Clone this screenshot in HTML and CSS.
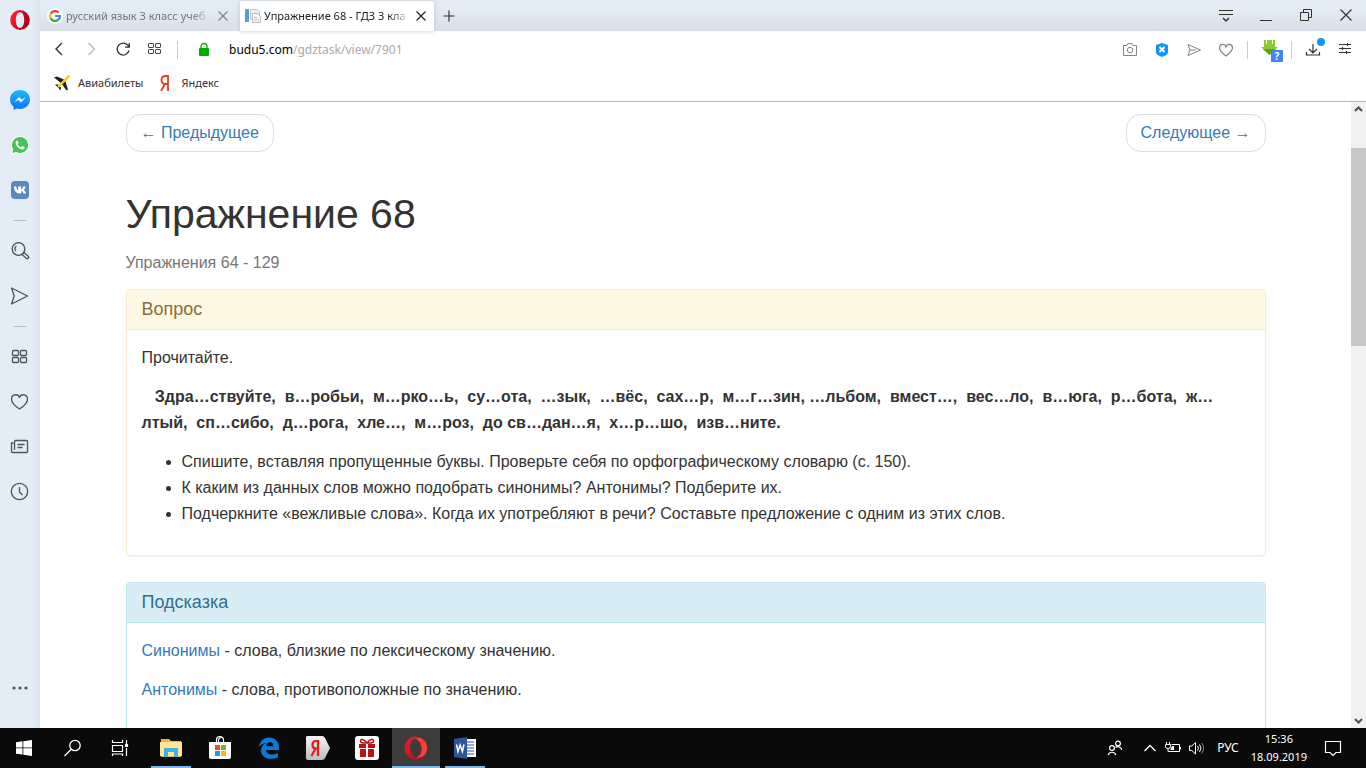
FILE: index.html
```html
<!DOCTYPE html>
<html lang="ru">
<head>
<meta charset="utf-8">
<title>Упражнение 68 - ГДЗ 3 класс</title>
<link rel="stylesheet" href="styles.css">
</head>
<body>
<div class="window">
  <nav class="sidebar" aria-label="Боковая панель">
    <button class="side-btn side-logo" aria-label="Opera"><svg width="20" height="20" viewBox="0 0 20 20"><defs><linearGradient id="op" x1="0" y1="0" x2="1" y2=".4"><stop offset=".2" stop-color="#ff1b2d"/><stop offset="1" stop-color="#a70014"/></linearGradient></defs><path fill="url(#op)" fill-rule="evenodd" d="M10 0a9.800 10 0 1 0 0 20a9.800 10 0 1 0 0-20zM10 2.200c2.700 0 4.200 3.500 4.200 7.800s-1.500 7.800-4.200 7.800s-4.200-3.500-4.200-7.800s1.500-7.800 4.200-7.800z"/></svg></button>
    <button class="side-btn" aria-label="Messenger"><svg width="20" height="20" viewBox="0 0 20 20"><defs><linearGradient id="ms" x1="0" y1="0" x2="0" y2="1"><stop offset="0" stop-color="#19b9ff"/><stop offset="1" stop-color="#0a72ff"/></linearGradient></defs><path fill="url(#ms)" d="M10 0C4.400 0 0 4.100 0 9.500c0 3 1.400 5.600 3.600 7.300V20l3.300-1.500c1 .3 2 .4 3.100.4 5.600 0 10-4.100 10-9.400S15.600 0 10 0z"/><path fill="#fff" d="M4 12.300l5-5.400 2.600 2.600L16 7l-5 5.500-2.700-2.600z"/></svg></button>
    <button class="side-btn" aria-label="WhatsApp"><svg width="20" height="20" viewBox="0 0 20 20"><path fill="#fff" d="M10 1a9 9 0 0 0-7.800 13.500L1 19.500l5-1.400A9 9 0 1 0 10 1z"/><path fill="#42c456" d="M10 2a8 8 0 0 0-6.800 12.200l-.9 3.800 3.900-1A8 8 0 1 0 10 2z"/><path fill="#fff" d="M7.300 5.400c-.9 0-1.700.9-1.700 2.100 0 3.200 3.900 7 6.900 7 1.300 0 2.200-.9 2.200-2 0-.4-2.200-1.500-2.500-1.400-.4.100-.9 1.200-1.300 1.200-.8 0-3.300-2.200-3.300-3 0-.4.900-.8.900-1.200 0-.4-.7-2.600-1.200-2.700z"/></svg></button>
    <button class="side-btn" aria-label="ВКонтакте"><svg width="20" height="20" viewBox="0 0 20 20"><rect x="1" y="1" width="18" height="18" rx="4" fill="#5b88bd"/><path fill="#fff" d="M4 6.500h2.200c.3 2.400 1.200 3.700 1.900 3.900V6.500h3v3c.9-.2 1.700-1.500 2.100-3h2.500c-.4 1.600-1.300 2.800-2 3.500.8.500 1.900 1.600 2.500 3.500h-2.700c-.4-1.200-1.200-2.200-2.400-2.400v2.400H10C6.300 13.500 4.100 11 4 6.500z"/></svg></button>
    <span class="side-line"></span>
    <button class="side-btn" aria-label="Поиск"><svg class="line" width="20" height="20" viewBox="0 0 20 20"><circle cx="8.500" cy="8" r="6.300"/><path d="M5.700 10a3.500 3.500 0 0 1 .7-5"/><path d="M12 13.500l2-2 4.200 3.800a1.300 1.300 0 0 1-2 2z"/></svg></button>
    <button class="side-btn" aria-label="Мой поток"><svg class="line" width="20" height="20" viewBox="0 0 20 20"><path d="M1.500 2l16 8-16 8 2.700-8z"/></svg></button>
    <span class="side-line"></span>
    <button class="side-btn" aria-label="Экспресс-панель"><svg class="line" width="20" height="20" viewBox="0 0 20 20"><rect x="2.500" y="3.500" width="6" height="5" rx="1"/><rect x="10.500" y="3.500" width="6" height="5" rx="1"/><rect x="2.500" y="10.500" width="6" height="5" rx="1"/><rect x="10.500" y="10.500" width="6" height="5" rx="1"/></svg></button>
    <button class="side-btn" aria-label="Закладки"><svg class="line" width="20" height="20" viewBox="0 0 20 20"><path d="M9.500 17C5 14 1.500 11 1.500 7.200c0-5 6.400-6 8-1.700 1.600-4.300 8-3.300 8 1.700 0 3.800-3.500 6.800-8 9.800z"/></svg></button>
    <button class="side-btn" aria-label="Новости"><svg class="line" width="20" height="20" viewBox="0 0 20 20"><path d="M4.500 13V4.500a1 1 0 0 1 1-1h11a1 1 0 0 1 1 1v10a1 1 0 0 1-1 1h-14a1 1 0 0 1-1-1V6h2M7.500 7.500h7M7.500 10.500h5"/></svg></button>
    <button class="side-btn" aria-label="История"><svg class="line" width="20" height="20" viewBox="0 0 20 20"><circle cx="9.500" cy="9.500" r="8.200"/><path d="M9.500 5v5l3 3"/></svg></button>
    <button class="side-btn side-more" aria-label="Ещё"><svg width="20" height="20" viewBox="0 0 20 20" fill="#4b545c"><circle cx="4" cy="10" r="1.600"/><circle cx="10" cy="10" r="1.600"/><circle cx="16" cy="10" r="1.600"/></svg></button>
  </nav>

  <div class="browser">
    <header class="tabs">
      <div class="tab">
        <svg width="16" height="16" viewBox="0 0 16 16"><circle cx="8" cy="8" r="8" fill="#fff"/><g fill="none" stroke-width="2.200"><path stroke="#ea4335" d="M3.700 5.700A5 5 0 0 1 11.700 4.600"/><path stroke="#fbbc05" d="M3.700 5.500a5 5 0 0 0 0 5"/><path stroke="#34a853" d="M3.600 10.300a5 5 0 0 0 7.800 1.300"/><path stroke="#4285f4" d="M8.200 8h4.800a5 5 0 0 1-1.700 3.800"/></g></svg>
        <span class="tab-title">русский язык 3 класс учеб</span>
        <button class="icon" aria-label="Закрыть вкладку"><svg width="14" height="14" viewBox="0 0 14 14" stroke="#7d8894" stroke-width="1.200"><path d="M2.500 2.500l9 9M11.500 2.500l-9 9"/></svg></button>
      </div>
      <div class="tab tab-active">
        <svg width="16" height="16" viewBox="0 0 16 16"><path fill="#eef1f4" stroke="#c3cad1" d="M5.500 1.500h7l2 2v8h-9z"/><path fill="#5b9fcf" d="M0 1h4v13H0z"/><path fill="#f7f9fa" stroke="#b4bcc4" d="M7.500 5.500h5l3 3v6h-8z"/><path stroke="#b4bcc4" d="M9 9.500h3M9 12h5"/></svg>
        <span class="tab-title">Упражнение 68 - ГДЗ 3 кла</span>
        <button class="icon" aria-label="Закрыть вкладку"><svg width="14" height="14" viewBox="0 0 14 14" stroke="#222" stroke-width="1.200"><path d="M2.500 2.500l9 9M11.500 2.500l-9 9"/></svg></button>
      </div>
      <button class="icon tab-new" aria-label="Новая вкладка"><svg width="14" height="14" viewBox="0 0 14 14" stroke="#333" stroke-width="1.200"><path d="M7 1.500v11M1.500 7h11"/></svg></button>
      <div class="win-buttons">
        <button class="icon" aria-label="Меню вкладок"><svg width="16" height="16" viewBox="0 0 16 16" fill="none" stroke="#333"><path d="M1 2.500h14M1 6.500h14"/><path stroke-width="1.500" d="M5 10l3 3 3-3"/></svg></button>
        <button class="icon" aria-label="Свернуть"><svg width="16" height="16" viewBox="0 0 16 16" stroke="#333"><path d="M2 12.500h12"/></svg></button>
        <button class="icon" aria-label="Восстановить"><svg width="16" height="16" viewBox="0 0 16 16" fill="none" stroke="#333"><path d="M2.500 4.500h8v8h-8zM5.500 4.500v-3h8v8h-3"/></svg></button>
        <button class="icon" aria-label="Закрыть"><svg width="16" height="16" viewBox="0 0 16 16" stroke="#333" stroke-width="1.200"><path d="M2.500 1.500l11 11M13.500 1.500l-11 11"/></svg></button>
      </div>
    </header>

    <div class="toolbar">
      <button class="icon" aria-label="Назад"><svg width="16" height="16" viewBox="0 0 16 16" fill="none" stroke="#333" stroke-width="1.400"><path d="M11 1L5 7l6 6"/></svg></button>
      <button class="icon" aria-label="Вперёд"><svg width="16" height="16" viewBox="0 0 16 16" fill="none" stroke="#bbb" stroke-width="1.400"><path d="M5.500 1l6 6-6 6"/></svg></button>
      <button class="icon" aria-label="Обновить"><svg width="16" height="16" viewBox="0 0 16 16" fill="none" stroke="#333" stroke-width="1.300"><path d="M14 8.500a6 6 0 1 1-1.200-5.300L14 4.500M14.300 1v4.200h-4.300"/></svg></button>
      <button class="icon" aria-label="Экспресс-панель"><svg width="16" height="16" viewBox="0 0 16 16" fill="none" stroke="#444"><rect x="1.500" y="1.500" width="5" height="4" rx=".5"/><rect x="8.500" y="1.500" width="5" height="4" rx=".5"/><rect x="1.500" y="7.500" width="5" height="4" rx=".5"/><rect x="8.500" y="7.500" width="5" height="4" rx=".5"/></svg></button>
      <span class="divider"></span>
      <svg class="lock" width="12" height="16" viewBox="0 0 12 16"><rect x="1" y="6" width="10" height="8" rx="1" fill="#0a0"/><path d="M3 7V4.500a3 3 0 0 1 6 0V7" fill="none" stroke="#0a0" stroke-width="1.300"/></svg>
      <div class="address"><span class="host">budu5.com</span>/gdztask/view/7901</div>
      <div class="tools">
        <button class="icon" aria-label="Снимок"><svg width="16" height="16" viewBox="0 0 16 16" fill="none" stroke="#858585"><path d="M1.500 3.500H5l1-2h4l1 2h3.500v10h-13z"/><circle cx="8" cy="8" r="2.700"/></svg></button>
        <button class="icon" aria-label="Блокировка рекламы"><svg width="16" height="16" viewBox="0 0 16 16"><path fill="#0a96ff" d="M2 3l6-2 6 2v7c0 3-4 4-6 5-2-1-6-2-6-5z"/><path d="M5.500 5l5 5M10.500 5l-5 5" stroke="#fff" stroke-width="2"/></svg></button>
        <button class="icon" aria-label="Поделиться"><svg width="16" height="16" viewBox="0 0 16 16" fill="none" stroke="#858585"><path d="M2 2.500l12.500 5.500L2 13.500l2-5.500zM4 8h6"/></svg></button>
        <button class="icon" aria-label="В закладки"><svg width="16" height="16" viewBox="0 0 16 16" fill="none" stroke="#858585" stroke-width="1.200"><path d="M8 14C4 11 1.500 9 1.500 6c0-4.500 5.300-4.800 6.500-1.200C9.200 1.200 14.500 1.500 14.500 6c0 3-2.500 5-6.500 8z"/></svg></button>
        <span class="divider"></span>
        <button class="icon ext" aria-label="Расширение"><svg width="22" height="24" viewBox="0 0 22 24"><path fill="#8ccc2c" d="M3 2h11v7h3l-8.500 8L0 9h3z"/><path stroke="#fff" d="M5.500 2v4M11.500 2v4"/><path fill="#5ba317" d="M2 11h13l-6.500 6z"/><rect x="10" y="12" width="12" height="12" fill="#4285f4"/></svg><span class="ext-badge">?</span></button>
        <span class="divider"></span>
        <button class="icon download" aria-label="Загрузки"><svg width="20" height="24" viewBox="0 0 20 24" fill="none" stroke="#333" stroke-width="1.200"><path d="M8 6v9M4 11l4 4 4-4M1.500 14v3h13v-3"/><circle cx="16" cy="4" r="4" fill="#0a96ff" stroke="none"/></svg></button>
        <button class="icon" aria-label="Настройки"><svg width="16" height="16" viewBox="0 0 16 16" stroke="#333"><path d="M2 2.500h12M2 6.500h12M2 10.500h12M10.500 1v3M5.500 5v3M9.500 9v3"/></svg></button>
      </div>
    </div>

    <nav class="bookmarks" aria-label="Закладки">
      <a href="#avia"><svg width="16" height="16" viewBox="0 0 16 16"><path fill="#222" d="M0 2.500L3 1.500l8 3.500 3 9.500-1.500 1L7.500 8.500zM1 9.500h3l3 3-.5 3-2-2.500z"/><path stroke="#fc0" stroke-width="2.400" d="M15.500.5L4 12"/></svg>Авиабилеты</a>
      <a href="#yandex"><svg width="16" height="16" viewBox="0 0 16 16" fill="none" stroke="#f03a1e" stroke-width="1.800"><path d="M11 0v16M11 1H8.500C5.500 1 4.500 2.700 4.500 5s1.500 4 4 4H11M8 9l-4 7"/></svg>Яндекс</a>
    </nav>

    <div class="viewport">
      <main class="page">
        <div class="container">
          <div class="pager"><a href="#prev">← Предыдущее</a><a href="#next">Следующее →</a></div>
          <h1>Упражнение 68</h1>
          <p class="muted">Упражнения 64 - 129</p>
          <section class="panel panel-warning">
            <h2>Вопрос</h2>
            <div class="panel-body">
              <p>Прочитайте.</p>
              <p><strong>&nbsp;&nbsp; Здра…ствуйте,&nbsp; в…робьи,&nbsp; м…рко…ь,&nbsp; су…ота,&nbsp; …зык,&nbsp; …вёс,&nbsp; сах…р,&nbsp; м…г…зин, …льбом,&nbsp; вмест…,&nbsp; вес…ло,&nbsp; в…юга,&nbsp; р…бота,&nbsp; ж…<wbr>лтый,&nbsp; сп…сибо,&nbsp; д…рога,&nbsp; хле…,&nbsp; м…роз,&nbsp; до св…дан…я,&nbsp; х…р…шо,&nbsp; изв…ните.</strong></p>
              <ul>
                <li>Спишите, вставляя пропущенные буквы. Проверьте себя по орфографическому словарю (с. 150).</li>
                <li>К каким из данных слов можно подобрать синонимы? Антонимы? Подберите их.</li>
                <li>Подчеркните «вежливые слова». Когда их употребляют в речи? Составьте предложение с одним из этих слов.</li>
              </ul>
            </div>
          </section>
          <section class="panel panel-info">
            <h2>Подсказка</h2>
            <div class="panel-body">
              <p><a href="#syn">Синонимы</a> - слова, близкие по лексическому значению.</p>
              <p><a href="#ant">Антонимы</a> - слова, противоположные по значению.</p>
              <p>&nbsp;</p>
            </div>
          </section>
        </div>
      </main>
      <div class="scrollbar">
        <svg width="15" height="17" viewBox="0 0 15 17" fill="none" stroke="#505050" stroke-width="2"><path d="M4 9l3.500-3.500L11 9"/></svg>
        <span class="thumb"></span>
        <svg width="15" height="17" viewBox="0 0 15 17" fill="none" stroke="#505050" stroke-width="2"><path d="M4 8l3.500 3.500L11 8"/></svg>
      </div>
    </div>
  </div>
</div>

<footer class="taskbar">
  <button class="task" aria-label="Пуск"><svg width="24" height="24" viewBox="0 0 24 24" fill="#fff"><path d="M4 6.200l6.500-.9v6.200H4zM11.300 5.200L20 4v7.500h-8.700zM4 12.300h6.500v6.300L4 17.700zM11.300 12.300H20V20l-8.700-1.200z"/></svg></button>
  <button class="task" aria-label="Поиск"><svg width="24" height="24" viewBox="0 0 24 24" fill="none" stroke="#fff" stroke-width="1.300"><circle cx="14" cy="9.500" r="5.200"/><path d="M10.300 13.300L3.500 20"/></svg></button>
  <button class="task" aria-label="Представление задач"><svg width="24" height="24" viewBox="0 0 24 24" fill="none" stroke="#fff" stroke-width="1.200"><path d="M2.500 4v2.500h10V4M2.500 9.500h10v6h-10zM2.500 20v-2h10v2M16.500 4v4M16.500 12v8"/><path fill="#fff" d="M15.500 8.500h2v2h-2z"/></svg></button>
  <button class="task task-open" aria-label="Проводник"><svg width="24" height="24" viewBox="0 0 24 24"><path fill="#e8b74a" d="M2 3h8l2 2h10v16H2z"/><path fill="#ffe59a" d="M1 6h22v14H1z"/><path fill="#f1a91e" d="M3 4h4v1H3z"/><path fill="#3ab2e5" d="M5 13q0-1 1-1h12q1 0 1 1v8h-4v-5H9v5H5z"/></svg></button>
  <button class="task" aria-label="Магазин"><svg width="24" height="24" viewBox="0 0 24 24"><path fill="none" stroke="#fff" stroke-width="1.200" d="M8.500 7V4a3.500 3.500 0 0 1 7 0v3M10.500 7V3.500a3 3 0 0 1 3-2"/><path fill="#fff" d="M1 6h22v15q0 2-2 2H3q-2 0-2-2z"/><path fill="#f25022" d="M7 9h5v5H7z"/><path fill="#7fba00" d="M13 9h5v5h-5z"/><path fill="#00a4ef" d="M7 15h5v5H7z"/><path fill="#ffb900" d="M13 15h5v5h-5z"/></svg></button>
  <button class="task" aria-label="Edge"><svg width="24" height="24" viewBox="0 0 24 24"><path fill="#0a7ad8" d="M2 11C3 5 7 1.500 12 1.500c6 0 10 4 10 9.500v3H9c.2 3 2.600 4.500 6 4.500 2.200 0 4.300-.6 6-1.500v4.300c-2 1-4.500 1.500-7 1.500-6 0-10-3.200-10-8.600C4 11 6 8.500 9 7c-3 .2-5.500 1.700-7 4zM9.200 10.300h7.300c0-2.500-1.200-4-3.500-4-2 0-3.500 1.500-3.800 4z"/></svg></button>
  <button class="task" aria-label="Яндекс"><svg width="24" height="24" viewBox="0 0 24 24"><defs><linearGradient id="ya" x1="0" y1="0" x2="0" y2="1"><stop offset="0" stop-color="#f4f4f4"/><stop offset="1" stop-color="#bdbdbd"/></linearGradient></defs><path fill="url(#ya)" d="M1 0h15q2 0 3 2l5 10-5 10q-1 2-3 2H2q-2 0-2-2V1z"/><path fill="none" stroke="#f21616" stroke-width="2.200" d="M12 4v16M12 5h-2C7.500 5 6.500 7 6.500 9s1.200 3.500 3.500 3.500h2M9.500 12.500L5.500 20"/></svg></button>
  <button class="task" aria-label="Подарки"><svg width="24" height="24" viewBox="0 0 24 24"><rect width="24" height="24" rx="3" fill="#fff"/><path fill="#b8121b" d="M4 8h7v4H4zM13 8h7v4h-7zM5 13h6v8H5zM13 13h6v8h-6z"/><path fill="none" stroke="#b8121b" stroke-width="1.500" d="M12 7C9 3 5.500 2.500 5.500 5S9 7 12 7zM12 7c3-4 6.500-4.500 6.500-2S15 7 12 7z"/></svg></button>
  <button class="task task-active" aria-label="Opera"><svg width="24" height="24" viewBox="0 0 24 24"><defs><linearGradient id="ot" x1="0" y1="0" x2="1" y2="1"><stop offset="0" stop-color="#e8202c"/><stop offset="1" stop-color="#b10d18"/></linearGradient></defs><circle cx="12" cy="12" r="11.500" fill="url(#ot)"/><path fill="#f5423f" d="M11 3c5-3 12 2 12 9s-6 11-11 9c8 0 8-17-1-18z"/><ellipse cx="11.500" cy="12" rx="5.300" ry="9.200" fill="#3c3c3c" transform="rotate(-6 12 12)"/></svg></button>
  <button class="task task-open" aria-label="Word"><svg width="24" height="24" viewBox="0 0 24 24"><path fill="#fff" d="M13 3h10v18H13z"/><path stroke="#2b5797" stroke-width="1.200" d="M14 6h7M14 9h7M14 12h7M14 15h7M14 18h7"/><path fill="#2b579a" d="M1 3l13-2v22L1 21z"/><path fill="none" stroke="#fff" stroke-width="1.500" d="M3.500 8.500l1.500 7 2.200-6.500 2.200 6.500 1.600-7"/></svg></button>
  <div class="tray">
    <button class="icon" aria-label="Люди"><svg width="16" height="16" viewBox="0 0 16 16" fill="none" stroke="#fff" stroke-width="1.200"><circle cx="5" cy="8" r="2.400"/><circle cx="11" cy="3.500" r="2.400"/><path d="M1.200 15a4 4 0 0 1 7.600 0M8.500 7.500a4 4 0 0 1 6.300 2.500"/></svg></button>
    <button class="icon tray-up" aria-label="Скрытые значки"><svg width="14" height="16" viewBox="0 0 14 16" fill="none" stroke="#fff" stroke-width="1.300"><path d="M1.500 11L7 5.500l5.500 5.500"/></svg></button>
    <svg width="16" height="16" viewBox="0 0 16 16" fill="none" stroke="#fff"><path d="M6.500 4.500h8v7h-8M15.500 7v2.500M1.500 2v2M4.500 2v2M.5 4.500h5v2q0 2-2.500 2t-2.500-2zM3 8.500v3h4"/><path fill="#fff" stroke="none" d="M7 6h2v4H5z"/></svg>
    <svg width="16" height="16" viewBox="0 0 16 16" fill="none" stroke="#fff"><path d="M.5 6v4.500h2.300L6.500 14V2.500L2.800 6zM8.500 6q2 2.200 0 4.500M10.500 4.500q3 3.700 0 7.500"/><path stroke="#888" d="M12.500 3q4.300 5.200 0 10.500"/></svg>
    <span class="lang">РУС</span>
    <time class="clock"><span>15:36</span><span>18.09.2019</span></time>
    <button class="icon tray-note" aria-label="Уведомления"><svg width="18" height="18" viewBox="0 0 18 18" fill="none" stroke="#fff" stroke-width="1.200"><path d="M1.500 2.500h15v11H12l-3 3-3-3H1.500z"/></svg></button>
  </div>
</footer>
</body>
</html>
```
FILE: styles.css
```css
* { box-sizing: border-box; }

body {
  margin: 0;
  height: 100vh;
  overflow: hidden;
  display: flex;
  flex-direction: column;
  font: 11px/16px "Noto Sans", sans-serif;
  color: #333;
  background: #e3ecf4;
}

svg { display: block; flex: none; }
button { font: inherit; color: inherit; border: 0; padding: 0; background: none; }
a { color: #337ab7; text-decoration: none; }
.icon { display: flex; flex: none; }

.window { flex: 1; min-height: 0; display: flex; }

/* Opera sidebar */
.sidebar {
  flex: none;
  width: 40px;
  display: flex;
  flex-direction: column;
  align-items: center;
  padding: 10px 0 15px;
  background: linear-gradient(to right, #e4edf5 80%, #dbe5ee);
}
.side-btn { flex: none; height: 20px; margin-bottom: 25px; }
.side-logo { margin-bottom: 60px; }
.side-line { width: 12px; height: 1px; margin: -5px 0 20px; background: #adbfcb; flex: none; }
.side-more { margin: auto 0 15px; }
.line { fill: none; stroke: #4b545c; stroke-width: 1.3; stroke-linejoin: round; }

.browser { flex: 1; min-width: 0; display: flex; flex-direction: column; background: #fff; }

/* Tab strip */
.tabs {
  flex: none;
  height: 31px;
  display: flex;
  align-items: stretch;
  background: linear-gradient(#e4edf5 20%, #d8dfe8);
}
.tab {
  width: 200px;
  display: flex;
  align-items: center;
  gap: 3px;
  padding: 1px 10px 0 7px;
  color: #6b7885;
}
.tab-active {
  width: 194px;
  margin-top: 1px;
  padding: 0 6px 1px 5px;
  color: #222;
  background: #fff;
  border-radius: 2px 2px 0 0;
  box-shadow: 0 0 4px #b9c4cf;
}
.tab-title {
  flex: 1;
  overflow: hidden;
  white-space: nowrap;
  -webkit-mask-image: linear-gradient(to right, #000 85%, transparent);
  mask-image: linear-gradient(to right, #000 85%, transparent);
}
.tab-new { align-self: center; margin-left: 8px; }
.win-buttons { margin-left: auto; display: flex; align-items: center; gap: 24px; padding-right: 12px; }

/* Address bar */
.toolbar { flex: none; height: 38px; display: flex; align-items: center; gap: 16px; padding: 0 13px 0 11px; }
.divider { width: 1px; height: 18px; background: #ccc; flex: none; }
.toolbar > .divider { margin-left: -2px; }
.lock { margin-left: 4px; }
.address { flex: 1; font-size: 12px; color: #aaa; margin-left: 3px; }
.host { color: #000; }
.tools { display: flex; align-items: center; gap: 16px; }
.tools .divider { margin: 0 -3px; }
.ext { position: relative; margin-right: -5px; }
.download { margin-right: -4px; }
.ext-badge {
  position: absolute;
  right: 0;
  bottom: 0;
  width: 12px;
  font-size: 10px;
  line-height: 12px;
  font-weight: bold;
  text-align: center;
  color: #fff;
}

.bookmarks {
  flex: none;
  height: 33px;
  display: flex;
  align-items: center;
  gap: 14px;
  padding: 0 14px 4px;
  border-bottom: 1px solid #aab9c8;
}
.bookmarks a { display: flex; align-items: center; gap: 8px; color: #333; }

/* Page content */
.viewport { flex: 1; min-height: 0; display: flex; }
.page { flex: 1; min-width: 0; overflow: hidden; font: 16px/26px "Liberation Sans", Arial, sans-serif; }
.container { max-width: 1140px; margin: 0 auto; padding-top: 12px; }
.pager { display: flex; justify-content: space-between; }
.pager a { padding: 5px 14px; border: 1px solid #ddd; border-radius: 15px; }
h1 { margin: 40px 0 13px; font-size: 41px; line-height: 45px; font-weight: normal; }
p { margin: 0 0 13px; }
.muted { color: #777; }
.panel {
  margin-bottom: 26px;
  border: 1px solid;
  border-radius: 4px;
  box-shadow: 0 1px 1px rgba(0, 0, 0, 0.05);
}
.panel h2 {
  margin: 0;
  padding: 10px 15px;
  font-size: 18px;
  line-height: 19px;
  font-weight: normal;
  border-bottom: 1px solid;
  border-radius: 3px 3px 0 0;
}
.panel-warning, .panel-warning h2 { border-color: #faebcc; }
.panel-warning h2 { color: #8a6d3b; background: #fcf8e3; }
.panel-info, .panel-info h2 { border-color: #bce8f1; }
.panel-info h2 { color: #31708f; background: #d9edf7; }
.panel-body { padding: 15px; }
ul { margin: 0 0 13px; padding-left: 40px; }

.scrollbar { flex: none; width: 15px; display: flex; flex-direction: column; background: #f1f1f1; }
.thumb { height: 198px; margin: 29px 0 auto; background: #c8c8c8; }

/* Windows taskbar */
.taskbar { flex: none; height: 40px; display: flex; background: #0b0a0b; color: #fff; }
.task { width: 48px; margin-right: 1px; display: flex; align-items: center; justify-content: center; }
.task-open { background: linear-gradient(#76b9ed, #76b9ed) center bottom / 40px 2px no-repeat; }
.task-active { background: linear-gradient(#76b9ed, #76b9ed) center bottom / 100% 2px no-repeat #3c3c3c; }
.tray { margin-left: auto; display: flex; align-items: center; gap: 8px; padding-right: 24px; }
.tray-up { margin-left: 12px; }
.lang { margin-left: 4px; font-size: 12px; }
.clock { display: flex; flex-direction: column; align-items: center; line-height: 18px; margin-left: 4px; }
.tray-note { margin-left: 9px; }
```
